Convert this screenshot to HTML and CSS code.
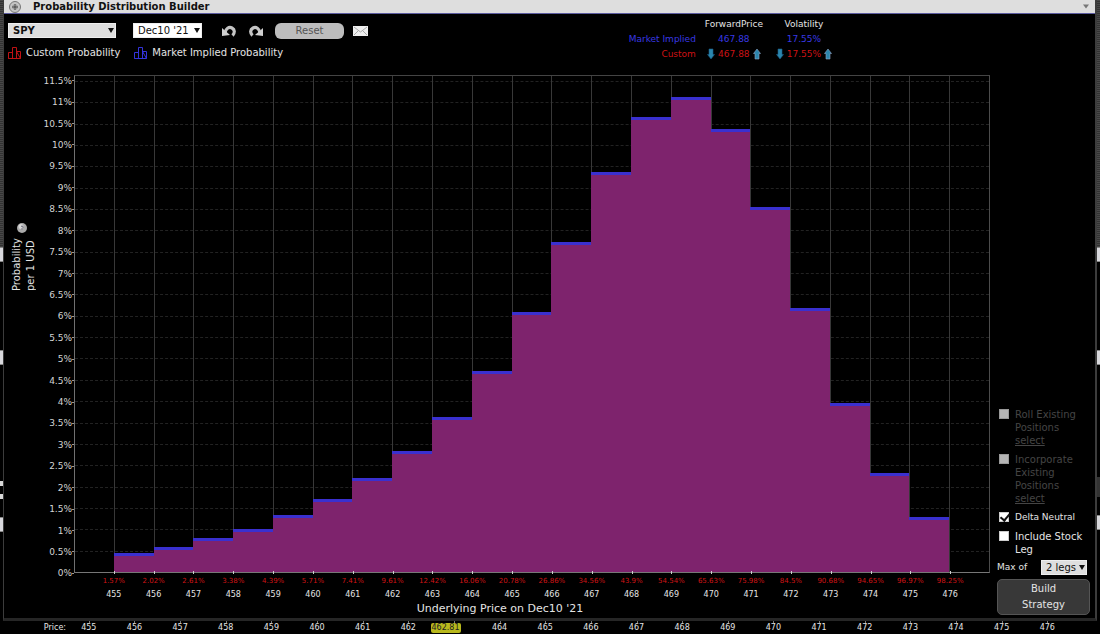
FILE: index.html
```html
<!DOCTYPE html>
<html lang="en">
<head>
<meta charset="utf-8">
<title>Probability Distribution Builder</title>
<link rel="stylesheet" href="styles.css">
</head>
<body>
<div class="page">
  <div class="gutter gutter-left" aria-hidden="true">
    <i class="hatch"></i><i class="tab"></i><i class="gap gap-long"></i><i class="tab"></i><i class="gap gap-longer"></i><i class="bit"></i><i class="gap gap-small"></i><i class="bit"></i><i class="gap gap-medium"></i><i class="tab"></i>
  </div>

  <section class="window">
    <header class="titlebar">
      <svg class="title-icon" viewBox="0 0 14 14" aria-hidden="true"><circle cx="7" cy="7" r="5.5" fill="#c4c4c4" stroke="#777"/><path d="M7 4v6M4 7h6" stroke="#555" stroke-width="1.4"/><path d="M5 5.2h4v3.6H5z" fill="none" stroke="#888" stroke-width=".7"/></svg>
      <h1>Probability Distribution Builder</h1>
      <svg class="title-menu" viewBox="0 0 6 5" aria-hidden="true"><path d="M0 .5h6L3 4.5z" fill="#777"/></svg>
    </header>

    <div class="top">
      <div class="controls">
        <div class="toolbar">
          <span class="select symbol"><select aria-label="Symbol"><option>SPY</option></select></span>
          <span class="select expiry"><select aria-label="Expiration"><option>Dec10 '21</option></select></span>
          <button class="icon-button" aria-label="Undo"><svg width="16" height="14" viewBox="0 0 16 14"><path d="M4 9C4.500 4.500 8 2.500 11 4C14 5.600 14 9 11.500 11.500" fill="none" stroke="#c4c4c4" stroke-width="3.200"/><path d="M1 4L1 12L9 11z" fill="#d0d0d0"/></svg></button>
          <button class="icon-button" aria-label="Redo"><svg width="16" height="14" viewBox="0 0 16 14"><path d="M12 9C11.500 4.500 8 2.500 5 4C2 5.600 2 9 4.500 11.500" fill="none" stroke="#c4c4c4" stroke-width="3.200"/><path d="M15 4L15 12L7 11z" fill="#d0d0d0"/></svg></button>
          <button class="reset">Reset</button>
          <button class="icon-button mail" aria-label="Mail"><svg width="15" height="10" viewBox="0 0 15 10"><path d="M0 0h15v10H0z" fill="#efefef"/><path d="M1 1l6.500 5L14 1M1 9l4.500-4.500M14 9L9.500 4.500" fill="none" stroke="#aaa"/></svg></button>
        </div>
        <div class="legend">
          <span class="key"><svg width="14" height="14" viewBox="0 0 14 14" stroke="#c01214" fill="none"><path d="M.5 12.500v-6h4v6zM4.500 12.500v-11h4v11M8.500 5.500h4v7zM.5 12.500h12"/></svg>Custom Probability</span>
          <span class="key"><svg width="14" height="14" viewBox="0 0 14 14" stroke="#3434dc" fill="none"><path d="M.5 12.500v-6h4v6zM4.500 12.500v-11h4v11M8.500 5.500h4v7zM.5 12.500h12"/></svg>Market Implied Probability</span>
        </div>
      </div>
      <table class="summary">
        <thead><tr><td></td><th scope="col">ForwardPrice</th><th scope="col">Volatility</th></tr></thead>
        <tbody>
          <tr class="implied"><th scope="row">Market Implied</th><td>467.88</td><td>17.55%</td></tr>
          <tr class="custom"><th scope="row">Custom</th>
            <td><span class="stepper"><button aria-label="Decrease forward price"><svg width="8" height="12" viewBox="0 0 8 12"><path d="M2 1h4v5.500H7.500L4 11L.5 6.500H2z" fill="#2b86ad" stroke="#195a86" stroke-width=".6"/></svg></button>467.88<button aria-label="Increase forward price"><svg width="8" height="12" viewBox="0 0 8 12"><path d="M2 11h4V5.500H7.500L4 1L.5 5.500H2z" fill="#2b86ad" stroke="#8fa4c8" stroke-width=".6"/></svg></button></span></td>
            <td><span class="stepper"><button aria-label="Decrease volatility"><svg width="8" height="12" viewBox="0 0 8 12"><path d="M2 1h4v5.500H7.500L4 11L.5 6.500H2z" fill="#2b86ad" stroke="#195a86" stroke-width=".6"/></svg></button>17.55%<button aria-label="Increase volatility"><svg width="8" height="12" viewBox="0 0 8 12"><path d="M2 11h4V5.500H7.500L4 1L.5 5.500H2z" fill="#2b86ad" stroke="#8fa4c8" stroke-width=".6"/></svg></button></span></td></tr>
        </tbody>
      </table>
    </div>

    <div class="workspace">
      <div class="axis-title">
        <svg width="12" height="12" viewBox="0 0 12 12" aria-hidden="true"><circle cx="6" cy="6" r="5" fill="#aaa"/><circle cx="5" cy="4.500" r="2.500" fill="#d8d8d8"/><path d="M5 4.500q1-1 2 0q.5 1-1 2v1" fill="none" stroke="#667"/></svg>
        <p>Probability<br>per 1 USD</p>
      </div>
      <div class="y-labels">
        <span>11.5%</span><span>11%</span><span>10.5%</span><span>10%</span><span>9.5%</span><span>9%</span><span>8.5%</span><span>8%</span><span>7.5%</span><span>7%</span><span>6.5%</span><span>6%</span><span>5.5%</span><span>5%</span><span>4.5%</span><span>4%</span><span>3.5%</span><span>3%</span><span>2.5%</span><span>2%</span><span>1.5%</span><span>1%</span><span>0.5%</span><span>0%</span>
      </div>
      <div class="plot">
        <div class="levels"><i></i><i></i><i></i><i></i><i></i><i></i><i></i><i></i><i></i><i></i><i></i><i></i><i></i><i></i><i></i><i></i><i></i><i></i><i></i><i></i><i></i><i></i><i></i></div>
        <div class="columns">
          <div></div>
          <div><b style="height:3.9%"></b></div>
          <div><b style="height:5.1%"></b></div>
          <div><b style="height:6.8%"></b></div>
          <div><b style="height:8.7%"></b></div>
          <div><b style="height:11.4%"></b></div>
          <div><b style="height:14.7%"></b></div>
          <div><b style="height:19%"></b></div>
          <div><b style="height:24.4%"></b></div>
          <div><b style="height:31.3%"></b></div>
          <div><b style="height:40.6%"></b></div>
          <div><b style="height:52.4%"></b></div>
          <div><b style="height:66.5%"></b></div>
          <div><b style="height:80.7%"></b></div>
          <div><b style="height:91.8%"></b></div>
          <div><b style="height:95.8%"></b></div>
          <div><b style="height:89.4%"></b></div>
          <div><b style="height:73.6%"></b></div>
          <div><b style="height:53.3%"></b></div>
          <div><b style="height:34.1%"></b></div>
          <div><b style="height:20%"></b></div>
          <div><b style="height:11.1%"></b></div>
          <div></div>
        </div>
      </div>
      <div class="x-axis">
        <div class="ticks cumulative"><span>1.57%</span><span>2.02%</span><span>2.61%</span><span>3.38%</span><span>4.39%</span><span>5.71%</span><span>7.41%</span><span>9.61%</span><span>12.42%</span><span>16.06%</span><span>20.78%</span><span>26.86%</span><span>34.56%</span><span>43.9%</span><span>54.54%</span><span>65.63%</span><span>75.98%</span><span>84.5%</span><span>90.68%</span><span>94.65%</span><span>96.97%</span><span>98.25%</span></div>
        <div class="ticks prices"><span>455</span><span>456</span><span>457</span><span>458</span><span>459</span><span>460</span><span>461</span><span>462</span><span>463</span><span>464</span><span>465</span><span>466</span><span>467</span><span>468</span><span>469</span><span>470</span><span>471</span><span>472</span><span>473</span><span>474</span><span>475</span><span>476</span></div>
        <p class="x-title">Underlying Price on Dec10 '21</p>
      </div>

      <aside class="options">
        <div class="option disabled"><input type="checkbox" id="roll" disabled><div><label for="roll">Roll Existing Positions</label><a href="#roll">select</a></div></div>
        <div class="option disabled"><input type="checkbox" id="incorporate" disabled><div><label for="incorporate">Incorporate Existing Positions</label><a href="#incorporate">select</a></div></div>
        <div class="option option-compact"><input type="checkbox" id="delta" checked><label for="delta">Delta Neutral</label></div>
        <div class="option"><input type="checkbox" id="stock"><label for="stock">Include Stock Leg</label></div>
        <div class="legs"><label for="legs">Max of</label><span class="select"><select id="legs"><option>2 legs</option></select></span></div>
        <button class="build">Build Strategy</button>
      </aside>
    </div>
  </section>

  <div class="gutter gutter-right" aria-hidden="true">
    <i class="hatch"></i><i class="tab"></i><i class="gap gap-long"></i><i class="tab"></i><i class="gap gap-right"></i><i class="block"></i><i class="gap gap-medium"></i><i class="tab"></i>
  </div>

  <footer class="price-strip">
    <span class="price-title">Price:</span>
    <div class="price-scale">
      <span>455</span><span>456</span><span>457</span><span>458</span><span>459</span><span>460</span><span>461</span><span>462</span><span></span><span>464</span><span>465</span><span>466</span><span>467</span><span>468</span><span>469</span><span>470</span><span>471</span><span>472</span><span>473</span><span>474</span><span>475</span><span>476</span>
      <mark style="left:37.8%">462.81</mark>
    </div>
  </footer>
</div>
</body>
</html>
```
FILE: styles.css
```css
* { box-sizing: border-box; }

body {
  margin: 0;
  background: #000;
  color: #e4e4e4;
  font-family: Verdana, "DejaVu Sans", sans-serif;
  font-size: 10px;
}

button, select, input { font: inherit; margin: 0; }
button { padding: 0; border: 0; background: none; color: inherit; cursor: pointer; }
h1, p { margin: 0; font-weight: normal; }
svg { display: block; flex: none; }

.page {
  display: grid;
  grid-template-columns: 3px 1fr 3px;
  grid-template-rows: 1fr 13px;
  min-height: 100vh;
}

/* Edges of the window behind */
.gutter { display: flex; flex-direction: column; }
.gutter i { display: block; flex: none; }
.hatch { height: 247px; background: repeating-linear-gradient(#484848 0 1px, #333 1px 2px); }
.tab { height: 15px; background: #d8d8dc; border: 1px solid #888; border-width: 1px 0; }
.gap-long { height: 88px; }
.gap-longer { height: 116px; }
.gap-right { height: 112px; }
.gap-medium { height: 18px; }
.gap-small { height: 8px; }
.bit { height: 5px; background: #d8d8d8; }
.block { height: 20px; background: #333; }

.window {
  display: flex;
  flex-direction: column;
  border: 1px solid #3c3c3c;
  border-width: 0 2px 3px 1px;
  border-bottom-color: #262626;
  min-width: 0;
}

.titlebar {
  display: flex;
  align-items: center;
  height: 14px;
  padding: 0 6px 0 4px;
  background: #dedede;
  border-bottom: 1px solid #5c5ca0;
  color: #111;
}
.title-icon { width: 14px; height: 14px; margin-right: 11px; }
.titlebar h1 { flex: 1; font-size: 10px; font-weight: bold; line-height: 12px; }
.title-menu { width: 6px; height: 5px; }

.top { display: grid; grid-template-columns: 57% auto; justify-content: start; height: 61px; }
.controls { padding: 8px 0 0 4px; }
.toolbar { display: flex; align-items: center; height: 17px; }

.select { position: relative; display: inline-block; }
.select select {
  appearance: none;
  display: block;
  width: 100%;
  height: 15px;
  padding: 0 4px;
  border: 1px solid #eee;
  border-radius: 0;
  background: #dedede;
  color: #111;
  line-height: 13px;
}
.select::after {
  content: "";
  position: absolute;
  right: 2px;
  top: 5px;
  border: 3px solid transparent;
  border-top: 5px solid #111;
  border-bottom: 0;
  pointer-events: none;
}
.symbol { width: 108px; margin-right: 17px; }
.symbol select { font-weight: bold; }
.expiry { width: 69px; margin-right: 19px; }
.expiry select { background: #fff; }
.icon-button { margin-right: 11px; }
.reset {
  width: 69px;
  height: 16px;
  margin-right: 9px;
  border-radius: 6px;
  background: #bdbdbd;
  color: #555;
  line-height: 16px;
}

.legend { display: flex; gap: 14px; padding-top: 6px; line-height: 16px; }
.key { display: flex; align-items: center; gap: 4px; }

.summary { margin-top: 2px; border-collapse: collapse; font-size: 9px; line-height: 12px; align-self: start; }
.summary th, .summary td { height: 15px; padding: 0; text-align: center; font-weight: normal; }
.summary th + th, .summary td + td, .summary th + td { width: 70px; }
.summary tbody th { width: 73px; padding-right: 3px; text-align: right; }
.implied { color: #3838e4; }
.custom { color: #cc1214; }
.stepper { display: flex; justify-content: center; align-items: center; gap: 3px; }

.workspace {
  display: grid;
  grid-template-columns: 33px 37px minmax(0, 1fr) 105px;
  grid-template-rows: 1fr 45px;
  flex: 1;
}

.axis-title { padding: 147px 0 0 6px; }
.axis-title svg { margin-left: 6px; }
.axis-title p { writing-mode: vertical-rl; transform: rotate(180deg); height: 57px; line-height: 14px; }

.y-labels {
  display: flex;
  flex-direction: column;
  margin: -5px 0 -11px;
  color: #d4d4d4;
  font-size: 9px;
}
.y-labels span {
  display: flex;
  flex: 1;
  align-items: center;
  justify-content: flex-end;
}
.y-labels span::after { content: ""; width: 2px; height: 1px; background: #999; }

.plot {
  position: relative;
  border: 1px solid;
  border-color: #444 #4c4c4c #777 #707070;
}
.levels { position: absolute; inset: 5px 0 0; display: flex; flex-direction: column; }
.levels i { flex: 1; border-top: 1px dashed #222; }
.columns { position: relative; display: flex; height: 100%; margin-left: -1px; }
.columns div { flex: 1; display: flex; align-items: flex-end; border-left: 1px solid #383838; }
.columns div:first-child { border-left-color: transparent; }
.columns b { flex: 1; margin-left: -1px; background: #7e236d; border-top: 3px solid #3a30cf; }

.x-axis { grid-column: 3; padding-top: 1px; }
.ticks { display: flex; padding: 0 calc(100% / 46); }
.ticks span { flex: 1 1 0; min-width: 0; text-align: center; }
.cumulative { color: #d01416; font-size: 7px; line-height: 14px; }
.cumulative span { position: relative; }
.cumulative span::before {
  content: "";
  position: absolute;
  left: 50%;
  top: -3px;
  width: 1px;
  height: 3px;
  background: #ccc;
}
.prices { font-size: 8px; line-height: 14px; }
.x-title { margin-right: 64px; text-align: center; font-size: 11px; line-height: 13px; }

.options {
  grid-column: 4;
  grid-row: 1 / 3;
  display: flex;
  flex-direction: column;
  justify-content: flex-end;
  gap: 6px;
  padding: 0 5px 3px 7px;
  line-height: 13px;
}
.option { display: flex; align-items: flex-start; gap: 6px; padding-left: 2px; }
.option-compact { font-size: 9px; }
.option label, .option a { display: block; }
.option a { color: inherit; }
.option input {
  appearance: none;
  flex: none;
  display: grid;
  width: 10px;
  height: 10px;
  margin-top: 1px;
  background: #fff;
  border: 1px solid #ccc;
}
.option input:checked::after {
  content: "";
  width: 4px;
  height: 7px;
  margin: -1px 0 0 2px;
  border: solid #111;
  border-width: 0 2px 2px 0;
  transform: rotate(40deg);
}
.disabled { color: #454545; }
.option input:disabled { background: #b5b5b5; border-color: #999; }
.legs {
  display: flex;
  align-items: center;
  justify-content: space-between;
  margin: -2px 0;
  padding-right: 3px;
  font-size: 9px;
}
.legs .select { width: 46px; font-size: 10px; }
.build {
  height: 36px;
  padding: 0 20px;
  border: 1px solid #555;
  border-radius: 5px;
  background: #383838;
  line-height: 16px;
}

.price-strip { grid-column: 1 / -1; display: flex; font-size: 8px; line-height: 13px; }
.price-title { width: 66px; text-align: right; }
.price-scale { position: relative; flex: 1; display: flex; margin-right: 30px; }
.price-scale span { position: relative; flex: 1; text-align: center; }
.price-scale span::before {
  content: "";
  position: absolute;
  left: 50%;
  top: 0;
  width: 1px;
  height: 2px;
  background: #777;
}
.price-scale mark {
  position: absolute;
  top: 2px;
  transform: translateX(-50%);
  padding: 0 1px;
  border-radius: 2px;
  background: #b8b81c;
  color: #222;
  line-height: 10px;
}
```
